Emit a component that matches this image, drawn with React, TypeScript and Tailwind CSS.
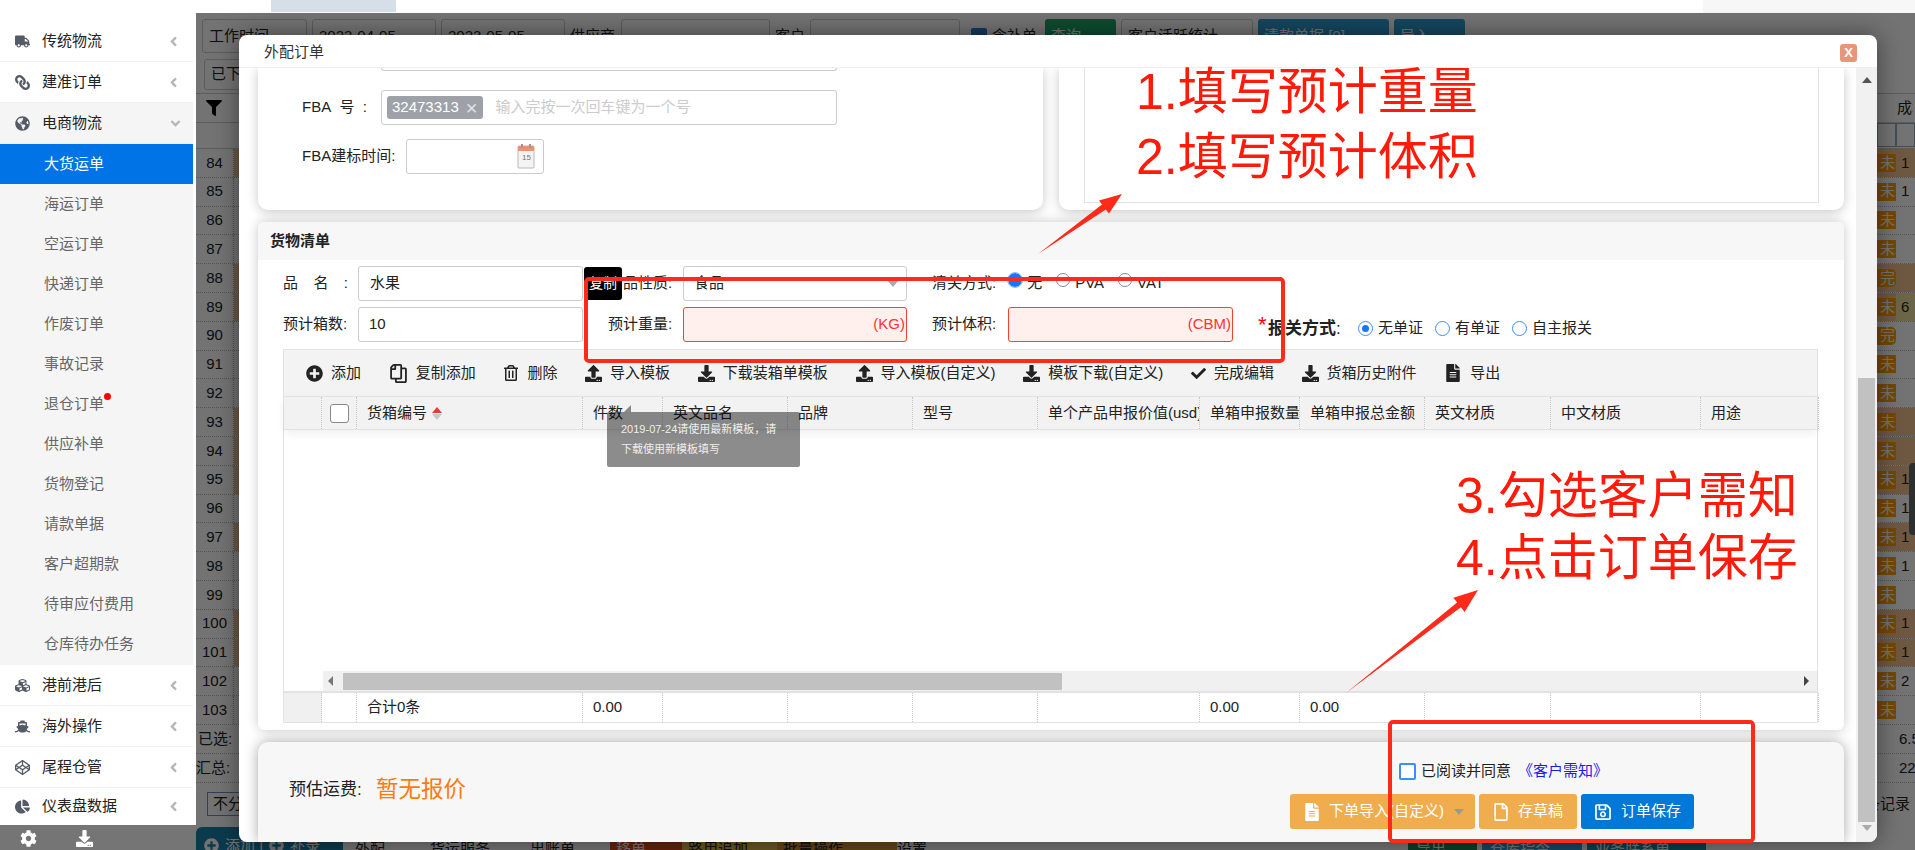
import { ReactNode } from "react";
import {
  FaAngleDown,
  FaAngleLeft,
  FaChartPie,
  FaCheck,
  FaCodepen,
  FaCog,
  FaCubes,
  FaDownload,
  FaFileAlt,
  FaFilter,
  FaGlobeAmericas,
  FaLink,
  FaPlusCircle,
  FaRegCopy,
  FaRegFile,
  FaRegSave,
  FaRegTrashAlt,
  FaShip,
  FaTruck,
  FaUpload,
} from "react-icons/fa";

const subMenu = ["大货运单", "海运订单", "空运订单", "快递订单", "作废订单", "事故记录", "退仓订单", "供应补单", "货物登记", "请款单据", "客户超期款", "待审应付费用", "仓库待办任务"];

const bgRows = [
  { no: 84, tan: true, tag: "未到", val: "1" },
  { no: 85, tan: false, tag: "未到", val: "1" },
  { no: 86, tan: false, tag: "未到", val: "" },
  { no: 87, tan: false, tag: "未到", val: "" },
  { no: 88, tan: true, tag: "完", val: "" },
  { no: 89, tan: true, tag: "未到", val: "6" },
  { no: 90, tan: false, tag: "完", val: "" },
  { no: 91, tan: false, tag: "未到", val: "" },
  { no: 92, tan: false, tag: "未到", val: "" },
  { no: 93, tan: true, tag: "未到", val: "" },
  { no: 94, tan: true, tag: "未到", val: "" },
  { no: 95, tan: true, tag: "未到", val: "1" },
  { no: 96, tan: false, tag: "未到", val: "1" },
  { no: 97, tan: true, tag: "未到", val: "1" },
  { no: 98, tan: false, tag: "未到", val: "1" },
  { no: 99, tan: false, tag: "未到", val: "" },
  { no: 100, tan: true, tag: "未到", val: "1" },
  { no: 101, tan: true, tag: "未到", val: "1" },
  { no: 102, tan: false, tag: "未到", val: "2" },
  { no: 103, tan: false, tag: "未到", val: "" },
];

const columns = ["", "", "货箱编号", "件数", "英文品名", "品牌", "型号", "单个产品申报价值(usd)", "单箱申报数量", "单箱申报总金额", "英文材质", "中文材质", "用途"];

const gridCols = "grid grid-cols-[38px_35px_226px_80px_125px_125px_125px_162px_100px_125px_126px_150px_118px]";

const MenuRow = ({ icon, label, open }: { icon: ReactNode; label: string; open?: boolean }) => (
  <div className={`flex h-[41px] w-[193px] items-center border-b border-[#f0f0f0] text-[15px] text-[#222] ${open ? "bg-[#f5f5f5]" : ""}`}>
    <span className="flex w-[42px] justify-center pl-[2px] text-[15px] text-[#555b66]">{icon}</span>
    <span className="flex-1">{label}</span>
    {open ? <FaAngleDown className="mr-[10px] text-[#b5b5b5]" /> : <FaAngleLeft className="mr-[12px] text-[#b5b5b5]" />}
  </div>
);

const Sidebar = () => (
  <aside className="z-20 flex h-[850px] w-[196px] shrink-0 flex-col bg-white">
    <div className="h-[21px]" />
    <MenuRow icon={<FaTruck />} label="传统物流" />
    <MenuRow icon={<FaLink className="-scale-x-100" />} label="建准订单" />
    <MenuRow icon={<FaGlobeAmericas />} label="电商物流" open />
    <ul className="h-[521px] w-[193px] bg-[#f5f5f5] text-[15px] text-[#666]">
      {subMenu.map((name, i) => (
        <li key={name} className={`flex h-[40px] items-center pl-[44px] ${i === 0 ? "bg-[#0073e6] text-white" : ""}`}>
          <span className="relative">
            {name}
            {name === "退仓订单" && <span className="absolute -right-[7px] top-0 h-[7px] w-[7px] rounded-full bg-[#f00]" />}
          </span>
        </li>
      ))}
    </ul>
    <MenuRow icon={<FaCubes />} label="港前港后" />
    <MenuRow icon={<FaShip />} label="海外操作" />
    <MenuRow icon={<FaCodepen />} label="尾程仓管" />
    <div className="flex h-[37px] w-[193px] items-center text-[15px] text-[#222]">
      <span className="flex w-[42px] justify-center pl-[2px] text-[#555b66]"><FaChartPie /></span>
      <span className="flex-1">仪表盘数据</span>
      <FaAngleLeft className="mr-[12px] text-[#b5b5b5]" />
    </div>
    <div className="flex flex-1 items-start gap-[39px] bg-[#757575] pl-[20px] pt-[5px] text-[17px] text-white">
      <FaCog />
      <FaDownload />
    </div>
  </aside>
);

const BgBox = ({ className, children }: { className: string; children?: ReactNode }) => (
  <div className={`flex shrink-0 items-center rounded-[3px] border border-[#ccc] px-[6px] text-[15px] ${className}`}>{children}</div>
);

// page behind the dialog, darkened by the overlay
const Background = () => (
  <main className="relative flex h-[850px] flex-1 flex-col overflow-hidden bg-white text-[15px] text-[#222]">
    <div className="flex h-[13px] shrink-0 bg-white pl-[75px]">
      <div className="h-[12px] w-[125px] bg-[#d6dee8]" />
      <div className="ml-auto h-[13px] w-[212px] bg-[#f7f7f7]" />
    </div>
    <div className="mt-[6px] flex items-center gap-[5px] whitespace-nowrap pl-[6px]">
      <BgBox className="h-[34px] w-[105px]">工作时间</BgBox>
      <BgBox className="h-[34px] w-[124px]">2023-04-05</BgBox>
      <BgBox className="h-[34px] w-[124px]">2023-05-05</BgBox>
      <span className="w-[46px]">供应商</span>
      <BgBox className="h-[34px] w-[149px]" />
      <span className="w-[30px]">客户</span>
      <BgBox className="h-[34px] w-[150px]" />
      <span className="ml-[6px] h-[16px] w-[16px] rounded-[2px] bg-[#2f7bd8]" />
      <span className="w-[48px]">含补单</span>
      <BgBox className="h-[34px] w-[71px] border-0 bg-[#1aa86a] text-white">查询</BgBox>
      <BgBox className="h-[34px] w-[132px]">客户活跃统计</BgBox>
      <BgBox className="h-[34px] w-[131px] border-0 bg-[#2e9ed6] text-white">清款单据 [0]</BgBox>
      <BgBox className="h-[34px] w-[71px] border-0 bg-[#2e9ed6] text-white">导入</BgBox>
    </div>
    <div className="mt-[6px] pl-[8px]">
      <BgBox className="h-[31px] w-[100px]">已下单</BgBox>
    </div>
    <div className="mt-[3px] flex h-[30px] items-center justify-between border-y border-[#ccc] pl-[10px] pr-[2px]">
      <FaFilter className="text-[16px] text-black" />
      <span className="w-[16px] overflow-hidden whitespace-nowrap">成本</span>
    </div>
    <div className="flex h-[26px] justify-end border-b border-[#ccc]">
      <div className="h-[24px] w-[19px] border border-[#9aa8bb]" />
      <div className="h-[24px] w-[19px] border border-[#9aa8bb]" />
    </div>
    <div className="flex flex-col">
      {bgRows.map((row) => (
        <div key={row.no} className="flex h-[28.8px] items-center justify-between border-b border-dotted border-[#bbb]">
          <div className="flex h-full">
            <span className="flex w-[38px] items-center justify-center border-r border-dotted border-[#aaa]">{row.no}</span>
            <span className={`w-[5px] ${row.tan ? "bg-[#f6c392]" : ""}`} />
          </div>
          <div className="flex h-full w-[38px] items-center">
            <div className={`flex h-full w-[19px] items-center ${row.tan ? "bg-[#f6c392]" : ""}`}>
              <span className={`flex h-[18px] w-[19px] items-center overflow-hidden whitespace-nowrap bg-[#ff9f00] pl-[3px] text-white ${row.tag === "完" ? "rounded-r-[5px]" : ""}`}>
                {row.tag}
              </span>
            </div>
            <span className={`flex h-full w-[19px] items-center pl-[5px] ${row.tan ? (row.val === "6" ? "bg-[#f2e0a0]" : "bg-[#f6c392]") : ""}`}>{row.val}</span>
          </div>
        </div>
      ))}
      <div className="flex h-[29px] items-center justify-between border-b border-dotted border-[#bbb] pl-[2px]">
        <span>已选:</span>
        <span className="w-[16px] overflow-hidden">6.5</span>
      </div>
      <div className="flex h-[29px] items-center justify-between border-b border-dotted border-[#bbb]">
        <span>汇总:</span>
        <span className="w-[16px] overflow-hidden">22</span>
      </div>
    </div>
    <div className="mt-[9px] flex h-[24px] items-center justify-between pl-[11px]">
      <span className="flex h-[24px] w-[60px] items-center border border-[#6f8fc0] pl-[5px]">不分页</span>
      <span className="flex w-[38px] justify-end overflow-hidden whitespace-nowrap pr-[5px]">
        <span className="shrink-0">条记录</span>
      </span>
    </div>
    <div className="mt-[11px] flex h-[23px] items-start whitespace-nowrap text-[15px]">
      <span className="flex h-[30px] w-[147px] items-center gap-[6px] rounded-tl-[6px] bg-[#1b81ab] pl-[8px] pt-[8px] text-white">
        <FaPlusCircle />
        添加 |
        <FaPlusCircle />
        补录
      </span>
      <span className="ml-[12px] w-[75px] pt-[11px]">外配</span>
      <span className="w-[100px] pt-[11px]">货运服务</span>
      <span className="w-[80px] pt-[11px]">出账单</span>
      <span className="h-[30px] w-[72px] bg-[#e04a1a] pl-[6px] pt-[11px] text-white">移单</span>
      <span className="h-[30px] w-[95px] bg-[#e8c04a] pl-[6px] pt-[11px]">路用追加</span>
      <span className="h-[30px] w-[120px] bg-[#d89a30] pl-[6px] pt-[11px]">批量操作</span>
      <span className="w-[511px] pt-[11px]">设置</span>
      <span className="h-[30px] w-[69px] bg-[#1a8a5a] pl-[8px] pt-[11px] text-white">导出</span>
      <span className="ml-[5px] h-[30px] w-[100px] bg-[#2e9ed6] pl-[8px] pt-[11px] text-white">仓库指令</span>
      <span className="ml-[5px] h-[30px] w-[119px] bg-[#0e8fa0] pl-[8px] pt-[11px] text-white">业务联系单</span>
    </div>
    <div className="absolute right-0 top-[463px] h-[72px] w-[6px] rounded-l-[4px] bg-[#666]" />
    <div className="absolute inset-x-0 bottom-0 top-[13px] bg-black/55" />
  </main>
);

const CalendarIcon = () => (
  <svg width="18" height="28" viewBox="0 0 18 28" className="shrink-0">
    <rect x="1" y="3" width="16" height="22" rx="1" fill="#f4f4f4" stroke="#b9b9b9" />
    <rect x="1" y="3" width="16" height="5" fill="#ef8f75" />
    <rect x="4" y="1" width="2" height="4" fill="#999" />
    <rect x="12" y="1" width="2" height="4" fill="#999" />
    <text x="5" y="17" fontSize="8" fill="#777" fontFamily="Liberation Sans">15</text>
  </svg>
);

const Field = ({ label, width = "w-[225px]", tone, children }: { label?: string; width?: string; tone?: "error"; children?: ReactNode }) => (
  <>
    {label && <span>{label}</span>}
    <div className={`flex h-[35px] shrink-0 items-center rounded-[3px] border px-[10px] ${width} ${tone === "error" ? "justify-end border-[#f5402c] bg-[#fff0ee] pr-[1px] text-[#f33]" : "border-[#ccc] bg-white"}`}>
      {children}
    </div>
  </>
);

const Radio = ({ on, solid, label }: { on?: boolean; solid?: boolean; label: string }) => (
  <span className="flex items-center gap-[5px]">
    {solid ? (
      <span className={`-mt-[8px] flex h-[14px] w-[14px] rounded-full border ${on ? "border-[3px] border-[#1677ff] bg-[#1677ff] outline-1 outline-[#8db9ff]" : "border-[#888] bg-white"}`} />
    ) : (
      <span className="flex h-[15px] w-[15px] items-center justify-center rounded-full border border-[#3c8dff] bg-white">
        {on && <span className="h-[7px] w-[7px] rounded-full bg-[#1677ff]" />}
      </span>
    )}
    {label}
  </span>
);

const toolbar = [
  { icon: <FaPlusCircle className="text-[17px]" />, label: "添加" },
  { icon: <FaRegCopy className="-scale-x-100 text-[19px]" />, label: "复制添加" },
  { icon: <FaRegTrashAlt className="text-[16px]" />, label: "删除" },
  { icon: <FaUpload className="text-[17px]" />, label: "导入模板" },
  { icon: <FaDownload className="text-[17px]" />, label: "下载装箱单模板" },
  { icon: <FaUpload className="text-[17px]" />, label: "导入模板(自定义)" },
  { icon: <FaDownload className="text-[17px]" />, label: "模板下载(自定义)" },
  { icon: <FaCheck className="text-[15px]" />, label: "完成编辑" },
  { icon: <FaDownload className="text-[17px]" />, label: "货箱历史附件" },
  { icon: <FaFileAlt className="text-[18px]" />, label: "导出" },
];

const GoodsCard = () => (
  <section className="mt-[12px] flex flex-col rounded-[6px] bg-white pb-[7px] shadow-[0_0_12px_rgba(0,0,0,0.22)]">
    <h3 className="flex h-[38px] items-center rounded-t-[6px] bg-[#f7f7f7] pl-[12px] text-[15px] font-bold text-[#222]">货物清单</h3>
    <div className="mt-[6px] flex items-center pl-[25px]">
      <span className="w-[75px] pr-[10px]">
        <span className="flex justify-between">
          <span>品</span>
          <span>名</span>
          <span>:</span>
        </span>
      </span>
      <Field><span className="pl-[1px]">水果</span></Field>
      <button className="ml-[1px] flex h-[33px] w-[38px] items-center justify-center rounded-[3px] bg-black text-[14px] text-white">复制</button>
      <span className="ml-[1px] w-[52px] whitespace-nowrap">品性质:</span>
      <div className="ml-[8px] flex h-[35px] w-[224px] items-center justify-between rounded-[3px] border border-[#ccc] pl-[10px] pr-[7px]">
        食品
        <span className="border-x-[6px] border-t-[7px] border-x-transparent border-t-[#aaa]" />
      </div>
      <span className="ml-[25px]">清关方式:</span>
      <span className="ml-[12px] flex items-center gap-[14px]">
        <Radio solid on label="无" />
        <Radio solid label="PVA" />
        <Radio solid label="VAT" />
      </span>
    </div>
    <div className="mt-[6px] flex items-center pl-[25px]">
      <span className="w-[75px]">预计箱数:</span>
      <Field>10</Field>
      <span className="ml-[25px] w-[66px]">预计重量:</span>
      <span className="ml-[9px]" />
      <Field tone="error" width="w-[224px]">(KG)</Field>
      <span className="ml-[25px] w-[76px]">预计体积:</span>
      <Field tone="error">(CBM)</Field>
      <span className="relative ml-[35px] mt-[8px] w-[90px] whitespace-nowrap text-[17px] font-bold">
        <span className="absolute -left-[10px] -top-[8px] text-[22px] font-normal text-[#f00]">*</span>
        报关方式<span className="font-normal">:</span>
      </span>
      <span className="mt-[8px] flex items-center gap-[12px]">
        <Radio on label="无单证" />
        <Radio label="有单证" />
        <Radio label="自主报关" />
      </span>
    </div>
    <div className="ml-[25px] mt-[7px] flex h-[374px] w-[1535px] flex-col border border-[#e2e2e2]">
      <div className="flex h-[46px] shrink-0 items-center gap-[27.7px] bg-[#f3f3f3] pl-[22px]">
        {toolbar.map((item) => (
          <span key={item.label} className="flex items-center gap-[8px] whitespace-nowrap">
            {item.icon}
            {item.label}
          </span>
        ))}
      </div>
      <div className={`${gridCols} h-[34px] shrink-0 border-y border-[#e2e2e2] bg-[#f2f2f2] shadow-[0_4px_8px_rgba(0,0,0,0.06)]`}>
        {columns.map((col, i) => (
          <div key={i} className="flex items-center overflow-hidden whitespace-nowrap border-r border-dotted border-[#c8c8c8] pl-[10px]">
            {i === 1 && <span className="ml-[-2px] h-[19px] w-[19px] rounded-[3px] border border-[#888] bg-white" />}
            {col}
            {i === 2 && (
              <span className="ml-[5px] flex flex-col gap-[1px]">
                <span className="border-x-[5px] border-b-[6px] border-x-transparent border-b-[#e23b3b]" />
                <span className="border-x-[5px] border-t-[6px] border-x-transparent border-t-[#c8c8c8]" />
              </span>
            )}
          </div>
        ))}
      </div>
      <div className="flex-1" />
      <div className="ml-[39px] flex h-[20px] shrink-0 items-center bg-[#f0f0f0]">
        <span className="ml-[5px] border-y-[5px] border-r-[5px] border-y-transparent border-r-[#777]" />
        <span className="ml-[10px] h-[17px] w-[719px] bg-[#c1c1c1]" />
        <span className="ml-auto mr-[8px] border-y-[5px] border-l-[5px] border-y-transparent border-l-[#444]" />
      </div>
      <div className={`${gridCols} h-[31px] shrink-0 border-t-2 border-[#e2e2e2]`}>
        {columns.map((_, i) => (
          <div key={i} className={`flex items-center border-r border-dotted border-[#c8c8c8] pl-[10px] ${i === 0 ? "bg-[#f0f0f0]" : ""}`}>
            {i === 2 && "合计0条"}
            {(i === 3 || i === 8 || i === 9) && "0.00"}
          </div>
        ))}
      </div>
    </div>
  </section>
);

const Dialog = () => (
  <div className="absolute left-[239px] top-[35px] z-10 flex h-[807px] w-[1638px] flex-col rounded-[8px] bg-white text-[15px] text-[#222] shadow-[0_0_24px_rgba(0,0,0,0.45)]">
    <header className="flex h-[33px] shrink-0 items-center justify-between border-b border-[#eee] pl-[25px] pr-[20px] pt-[3px]">
      <span className="text-[#333]">外配订单</span>
      <button className="flex h-[18px] w-[17px] items-center justify-center rounded-[3px] bg-[#e8967a] text-[13px] font-bold leading-none text-white">X</button>
    </header>
    <div className="flex min-h-0 flex-1">
      <div className="min-w-0 flex-1 overflow-hidden pl-[19px] pr-[12px]">
        <div className="grid h-[142px] grid-cols-2 gap-[16px]">
          <div className="rounded-b-[10px] bg-white shadow-[0_2px_12px_rgba(0,0,0,0.22)]">
            <div className="ml-[123px] h-[3px] w-[456px] rounded-b-[3px] border-x border-b border-[#ccc]" />
            <div className="mt-[19px] flex items-center pl-[44px]">
              <span className="w-[79px]">FBA&nbsp;&nbsp;号&nbsp;&nbsp;:</span>
              <div className="flex h-[35px] w-[456px] items-center rounded-[3px] border border-[#ccc] pl-[5px]">
                <span className="flex h-[23px] items-center gap-[7px] rounded-[3px] bg-[#9ea2a8] pl-[5px] pr-[6px] text-white">
                  32473313<span className="text-[20px] leading-none text-[#e4e4e4]">×</span>
                </span>
                <span className="ml-[12px] text-[#ccc]">输入完按一次回车键为一个号</span>
              </div>
            </div>
            <div className="mt-[14px] flex items-center pl-[44px]">
              <span className="w-[104px] whitespace-nowrap">FBA建标时间:</span>
              <div className="flex h-[35px] w-[138px] items-center justify-end rounded-[3px] border border-[#ccc] pr-[8px]">
                <CalendarIcon />
              </div>
            </div>
          </div>
          <div className="rounded-b-[10px] bg-white px-[25px] shadow-[0_2px_12px_rgba(0,0,0,0.22)]">
            <div className="h-[135px] border-x border-b border-[#e2e2e2]" />
          </div>
        </div>
        <GoodsCard />
        <section className="mt-[12px] flex h-[100px] justify-between rounded-t-[10px] bg-[#f7f7f7] pr-[150px] shadow-[0_0_14px_rgba(0,0,0,0.35)]">
          <div className="flex items-center pb-[4px] pl-[31px]">
            <span className="w-[87px] text-[17px]">预估运费:</span>
            <span className="text-[22.5px] text-[#ff7a0d]">暂无报价</span>
          </div>
          <div className="flex flex-col pt-[21px]">
            <label className="ml-[109px] flex h-[17px] items-center">
              <span className="h-[17px] w-[17px] rounded-[2px] border-2 border-[#3c8dff] bg-white" />
              <span className="ml-[5px]">已阅读并同意</span>
              <span className="ml-[7px] text-[#1a1aee]">《客户需知》</span>
            </label>
            <div className="mt-[14px] flex gap-[4px] text-white">
              <button className="flex h-[35px] w-[185px] items-center gap-[8px] rounded-[3px] bg-[#f0ad4e] pl-[13px] text-[15px]">
                <FaFileAlt className="text-[18px]" />
                下单导入(自定义)
                <span className="ml-[2px] border-x-[5px] border-t-[6px] border-x-transparent border-t-[#999]" />
              </button>
              <button className="flex h-[35px] w-[98px] items-center gap-[8px] rounded-[3px] bg-[#f0ad4e] pl-[13px] text-[15px]">
                <FaRegFile className="text-[18px]" />
                存草稿
              </button>
              <button className="flex h-[35px] w-[113px] items-center gap-[9px] rounded-[3px] bg-[#0078d7] pl-[13px] text-[15px]">
                <FaRegSave className="text-[18px]" />
                订单保存
              </button>
            </div>
          </div>
        </section>
      </div>
      <div className="flex w-[21px] shrink-0 flex-col items-center rounded-br-[8px] bg-[#f1f1f1]">
        <span className="mt-[9px] border-x-[5px] border-b-[6px] border-x-transparent border-b-[#555]" />
        <span className="mt-[295px] h-[444px] w-[17px] bg-[#c1c1c1]" />
        <span className="mt-[3px] border-x-[5px] border-t-[6px] border-x-transparent border-t-[#aaa]" />
      </div>
    </div>
  </div>
);

const Notes = () => (
  <div className="text-[50px] font-normal leading-none text-[#ff1a0a]">
    <div className="absolute left-[1136px] top-[60px] z-30 whitespace-nowrap leading-[65px]">
      1.填写预计重量
      <br />
      2.填写预计体积
    </div>
    <div className="absolute left-[1456px] top-[465px] z-30 whitespace-nowrap leading-[62px]">
      3.勾选客户需知
      <br />
      4.点击订单保存
    </div>
    <div className="absolute left-[584px] top-[277px] z-30 h-[86px] w-[701px] rounded-[5px] border-4 border-[#ff2a1a]" />
    <div className="absolute left-[1388px] top-[720px] z-30 h-[123px] w-[367px] rounded-[5px] border-4 border-[#ff2a1a]" />
    <svg className="pointer-events-none absolute left-0 top-0 z-30" width="1915" height="850">
      <polygon points="1038,254 1102,204.6 1099,200.5 1122,194 1109,213.5 1105.8,209.4" fill="#ff2a1a" />
      <polygon points="1346,693 1457.1,602.4 1453.4,597.7 1478,590 1464.6,611.9 1460.9,607.2" fill="#ff2a1a" />
    </svg>
    <div className="absolute left-[607px] top-[412px] z-20 h-[55px] w-[193px] rounded-[2px] bg-black/45 pl-[14px] pt-[7px] text-[11px] leading-[20px] text-[#eee]">
      <span className="absolute -top-[7px] left-[17px] border-b-[7px] border-l-[7px] border-b-[#888] border-l-transparent" />
      2019-07-24请使用最新模板，请
      <br />
      下载使用新模板填写
    </div>
  </div>
);

export default function App() {
  return (
    <div className="relative flex h-[850px] w-[1915px] overflow-hidden font-['Liberation_Sans','Noto_Sans_CJK_SC',sans-serif]">
      <Sidebar />
      <Background />
      <Dialog />
      <Notes />
    </div>
  );
}
